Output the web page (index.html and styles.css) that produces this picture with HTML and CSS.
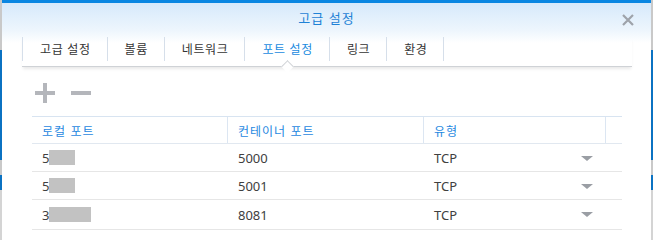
FILE: index.html
```html
<!DOCTYPE html>
<html lang="ko">
<head>
  <meta charset="UTF-8" />
  <title>고급 설정</title>
  <link rel="stylesheet" href="styles.css">
</head>
<body>
<div class="dialog">
  <div class="dlg-head">
    <div class="dlg-title">고급 설정</div>
    <span class="close-btn">
      <svg width="12" height="12" viewBox="0 0 12 12"><path d="M1 1L11 11M11 1L1 11" stroke="#9ea3aa" stroke-width="2.2" fill="none"/></svg>
    </span>
    <div class="tab-bar">
      <div class="tab">고급 설정</div>
      <div class="tab">볼륨</div>
      <div class="tab">네트워크</div>
      <div class="tab active">포트 설정</div>
      <div class="tab">링크</div>
      <div class="tab last">환경</div>
    </div>
  </div>

  <div class="content">
    <div class="toolbar">
      <span class="tool-btn">
        <svg width="20" height="20" viewBox="0 0 20 20"><path d="M0 10H20M10 0V20" stroke="#b4b6bb" stroke-width="4"/></svg>
      </span>
      <span class="tool-btn">
        <svg width="20" height="20" viewBox="0 0 20 20"><path d="M0 10H20" stroke="#b4b6bb" stroke-width="4"/></svg>
      </span>
    </div>

    <div class="grid">
      <div class="grid-head">
        <div class="cell col-local">로컬 포트</div>
        <div class="cell col-cont">컨테이너 포트</div>
        <div class="cell col-type">유형</div>
        <div class="cell col-pad"></div>
      </div>
      <div class="grid-row">
        <div class="cell col-local">5<span class="mask" style="width:26px"></span></div>
        <div class="cell col-cont">5000</div>
        <div class="cell col-type">TCP<span class="arrow"></span></div>
        <div class="cell col-pad"></div>
      </div>
      <div class="grid-row">
        <div class="cell col-local">5<span class="mask" style="width:26px"></span></div>
        <div class="cell col-cont">5001</div>
        <div class="cell col-type">TCP<span class="arrow"></span></div>
        <div class="cell col-pad"></div>
      </div>
      <div class="grid-row">
        <div class="cell col-local">3<span class="mask" style="width:42px"></span></div>
        <div class="cell col-cont">8081</div>
        <div class="cell col-type">TCP<span class="arrow"></span></div>
        <div class="cell col-pad"></div>
      </div>
    </div>
  </div>
</div>
</body>
</html>
```

FILE: styles.css
```css
* {
  margin: 0;
  padding: 0;
  box-sizing: border-box;
}
html, body {
  width: 653px;
  height: 240px;
  overflow: hidden;
}
body {
  background: linear-gradient(to bottom, #c9c9c9 0, #c9c9c9 50px, #0b72c2 50px, #0b72c2 160px, #c9c9c9 160px, #c9c9c9 175px, #0b72c2 175px, #0b72c2 190px, #d4d4d4 190px);
  font-family: "Noto Sans", "Noto Sans CJK KR", sans-serif;
  color: #404040;
}
.dialog {
  position: relative;
  margin-left: 2px;
  width: 649px;
  height: 240px;
  background: #fff;
  border-top: 3px solid #0a86e2;
}
.dlg-head {
  background: linear-gradient(to bottom, #d6e9fb 0, #eef6fd 28px, #fff 40px);
}
.dlg-title {
  height: 30px;
  line-height: 30px;
  text-align: center;
  font-family: "Noto Sans CJK KR", sans-serif;
  font-size: 13px;
  letter-spacing: 1px;
  color: #1f82d6;
}
.close-btn {
  position: absolute;
  top: 11px;
  right: 17px;
  width: 12px;
  height: 12px;
}
.close-btn svg {
  display: block;
}
.tab-bar {
  display: flex;
  margin: 4px 19px 0 20px;
  padding-bottom: 5px;
  border-bottom: 1px solid #cfd2d6;
  box-shadow: 0 3px 3px -1px rgba(0, 0, 0, 0.09);
}
.tab {
  position: relative;
  height: 24px;
  line-height: 23px;
  padding: 0 16px 0 17px;
  border-left: 1px solid #d6dfea;
  font-family: "Noto Sans CJK KR", sans-serif;
  font-size: 12px;
  letter-spacing: 0.6px;
  color: #333;
}
.tab.last {
  border-right: 1px solid #d6dfea;
}
.tab.active {
  color: #1a8be0;
}
.tab.active::after {
  content: "";
  position: absolute;
  top: 25px;
  left: calc(50% - 4px);
  width: 8px;
  height: 8px;
  background: #fff;
  border-top: 1px solid #cfd2d6;
  border-left: 1px solid #cfd2d6;
  transform: rotate(45deg);
}
.content {
  padding: 16px 29px 0 30px;
}
.toolbar {
  display: flex;
  gap: 16px;
  padding-left: 3px;
  height: 20px;
}
.tool-btn svg {
  display: block;
}
.grid {
  margin-top: 13px;
  width: 590px;
}
.grid-head, .grid-row {
  display: flex;
}
.grid-head {
  height: 28px;
  border-top: 1px solid #d8e4f1;
  border-bottom: 1px solid #e1e8f0;
}
.grid-head .cell {
  font-family: "Noto Sans CJK KR", sans-serif;
  font-size: 12px;
  letter-spacing: 1px;
  color: #1f88df;
  line-height: 25px;
  border-right: 1px solid #dce6f2;
}
.grid-head .cell:last-child {
  border-right: none;
}
.grid-row {
  height: 28px;
  border-bottom: 1px solid #e6e6e6;
}
.grid-row:last-child {
  height: 30px;
}
.cell {
  display: flex;
  align-items: center;
  padding-left: 10px;
  font-size: 13px;
}
.col-local { width: 196px; }
.col-cont { width: 196px; }
.col-type { width: 182px; position: relative; }
.col-pad { width: 16px; padding: 0; }
.mask {
  display: inline-block;
  height: 15px;
  background: #c2c2c2;
}
.arrow {
  position: absolute;
  right: 13px;
  top: 12px;
  width: 0;
  height: 0;
  border-left: 6px solid transparent;
  border-right: 6px solid transparent;
  border-top: 5px solid #9a9ea4;
}
```
